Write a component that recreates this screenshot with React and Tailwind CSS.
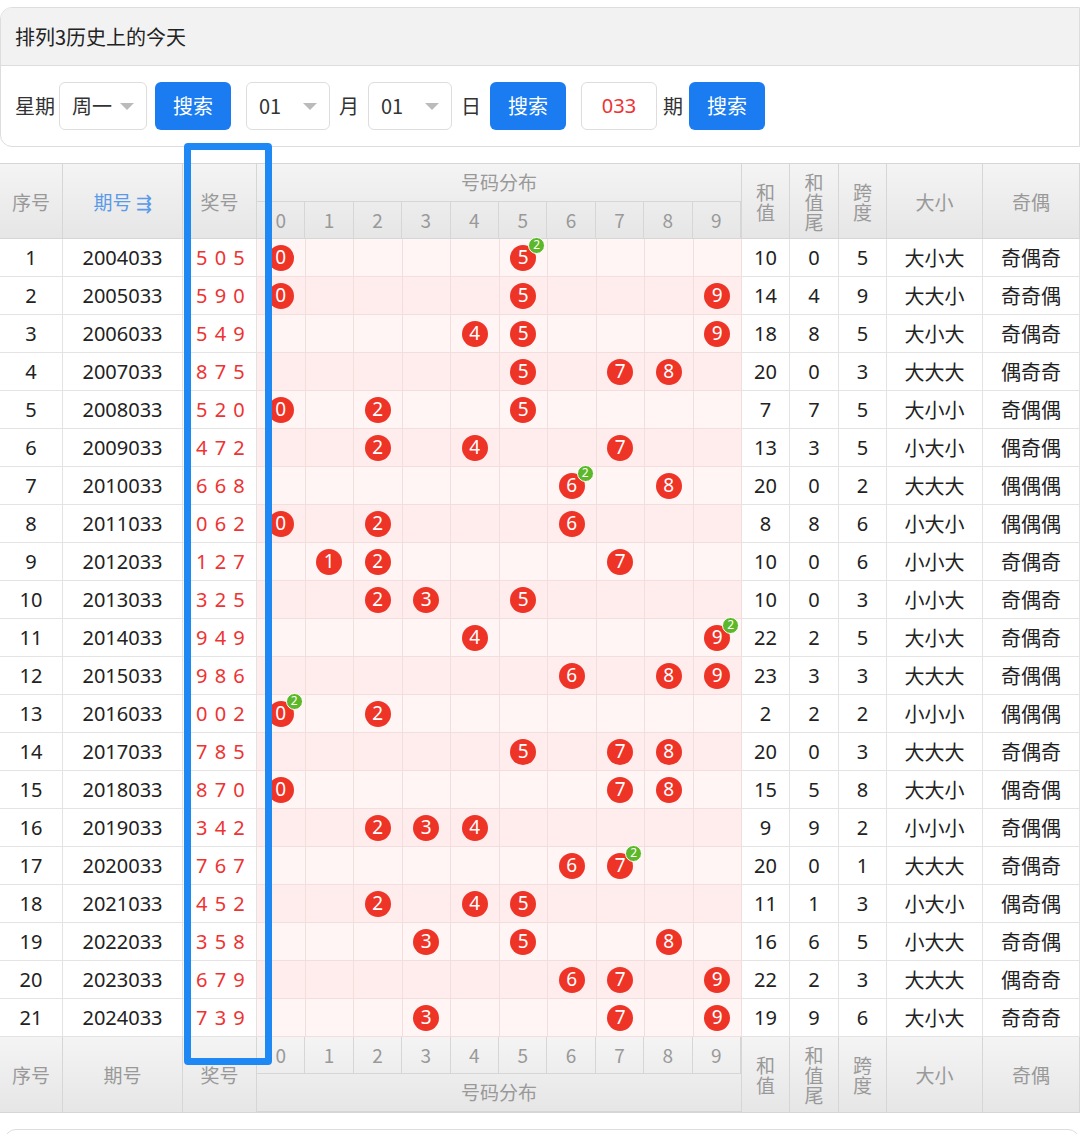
import React from "react";

const rows = [
["1","2004033","505","10","0","5","大小大","奇偶奇"],
["2","2005033","590","14","4","9","大大小","奇奇偶"],
["3","2006033","549","18","8","5","大小大","奇偶奇"],
["4","2007033","875","20","0","3","大大大","偶奇奇"],
["5","2008033","520","7","7","5","大小小","奇偶偶"],
["6","2009033","472","13","3","5","小大小","偶奇偶"],
["7","2010033","668","20","0","2","大大大","偶偶偶"],
["8","2011033","062","8","8","6","小大小","偶偶偶"],
["9","2012033","127","10","0","6","小小大","奇偶奇"],
["10","2013033","325","10","0","3","小小大","奇偶奇"],
["11","2014033","949","22","2","5","大小大","奇偶奇"],
["12","2015033","986","23","3","3","大大大","奇偶偶"],
["13","2016033","002","2","2","2","小小小","偶偶偶"],
["14","2017033","785","20","0","3","大大大","奇偶奇"],
["15","2018033","870","15","5","8","大大小","偶奇偶"],
["16","2019033","342","9","9","2","小小小","奇偶偶"],
["17","2020033","767","20","0","1","大大大","奇偶奇"],
["18","2021033","452","11","1","3","小大小","偶奇偶"],
["19","2022033","358","16","6","5","小大大","奇奇偶"],
["20","2023033","679","22","2","3","大大大","偶奇奇"],
["21","2024033","739","19","9","6","大小大","奇奇奇"],
];

const F = { fontFamily: '"Noto Sans","Noto Sans CJK SC",sans-serif' };
const C = { fontFamily: '"Noto Sans CJK SC","Noto Sans",serif' };
const cols = "grid-cols-[63px_120px_74px_repeat(10,48.5px)_48px_49px_48px_96px_97px]";

function Caret() {
  return <span className="inline-block w-0 h-0 border-l-[7px] border-r-[7px] border-t-[7px] border-l-transparent border-r-transparent border-t-[#bbb]" />;
}
function Sel({ v, w }) {
  return (
    <div className={`h-[48px] ${w} border border-[#ddd] rounded-md bg-white flex items-center justify-between px-3 text-[20px] text-[#333]`}>
      <span>{v}</span><Caret />
    </div>
  );
}
function Btn() {
  return <div className="h-[48px] w-[76px] rounded-md bg-[#1a7cf0] text-white text-[20px] flex items-center justify-center">搜索</div>;
}

const hd = "border-r border-[#d6d6d6] text-[#999] text-[19px] flex items-center justify-center text-center leading-[20px]";

function Header({ bottom }) {
  const digits = (
    <div className="grid grid-cols-10 h-[37px] border-b border-[#d6d6d6]">
      {[0,1,2,3,4,5,6,7,8,9].map(d => <div key={d} className={hd}>{d}</div>)}
    </div>
  );
  const label = <div className="h-[38px] flex items-center justify-center text-[#999] text-[19px] border-b border-[#d6d6d6]">号码分布</div>;
  return (
    <div className={`grid ${cols} h-[76px] bg-gradient-to-b from-[#f4f4f4] to-[#e6e6e6] border-b border-[#d6d6d6] ${bottom ? "" : "border-t"}`} style={C}>
      <div className={hd}>序号</div>
      <div className={hd + (bottom ? "" : " !text-[#5a9ae8]")}>{bottom ? "期号" : <>期号 <span className="ml-1">⇶</span></>}</div>
      <div className={hd}>奖号</div>
      <div className="col-span-10 flex flex-col border-r border-[#d6d6d6]">
        {bottom ? <>{digits}{label}</> : <>{label}{digits}</>}
      </div>
      <div className={hd}>和<br/>值</div>
      <div className={hd}>和<br/>值<br/>尾</div>
      <div className={hd}>跨<br/>度</div>
      <div className={hd}>大小</div>
      <div className={hd}>奇偶</div>
    </div>
  );
}

function Row({ r, i }) {
  const ds = r[2].split("").map(Number);
  const cnt = {};
  ds.forEach(d => cnt[d] = (cnt[d] || 0) + 1);
  const pink = i % 2 === 1 ? "bg-[#ffecec]" : "bg-[#fff5f5]";
  const cell = "h-[38px] overflow-visible whitespace-nowrap border-r border-b border-[#e3e3e3] flex items-center justify-center text-[20px] text-[#222]";
  return (
    <div className={`grid ${cols} h-[38px]`} style={F}>
      <div className={cell}>{r[0]}</div>
      <div className={cell}>{r[1]}</div>
      <div className={cell + " !justify-start pl-[13px] !text-[#e33] tracking-[1px]"}>{ds.join(" ")}</div>
      {[0,1,2,3,4,5,6,7,8,9].map(d => (
        <div key={d} className={`${cell} ${pink} !border-[#f3dede] relative`}>
          {cnt[d] && (
            <div className="relative w-[26px] h-[26px] rounded-full bg-[#ee3327] text-white text-[19px] leading-none flex items-center justify-center">
              {d}
              {cnt[d] > 1 && <span className="absolute -top-[8px] -right-[9px] w-[17px] h-[17px] rounded-full bg-[#5cb82a] border border-white text-white text-[12px] leading-none flex items-center justify-center">{cnt[d]}</span>}
            </div>
          )}
        </div>
      ))}
      <div className={cell}>{r[3]}</div>
      <div className={cell}>{r[4]}</div>
      <div className={cell}>{r[5]}</div>
      <div className={cell} style={C}>{r[6]}</div>
      <div className={cell} style={C}>{r[7]}</div>
    </div>
  );
}

export default function App() {
  return (
    <div className="w-[1080px] h-[1134px] bg-white overflow-hidden relative" style={C}>
      <div className="pt-[7px]">
        <div className="border border-[#ddd] rounded-l-xl overflow-hidden">
          <div className="h-[58px] bg-[#f2f2f2] border-b border-[#ddd] flex items-center pl-[14px] text-[20px] text-[#222]">排列3历史上的今天</div>
          <div className="h-[80px] flex items-center pl-[14px] text-[20px] text-[#333]">
            <span className="mr-[4px]">星期</span>
            <Sel v="周一" w="w-[88px]" />
            <div className="ml-[8px]"><Btn /></div>
            <div className="ml-[15px]"><Sel v="01" w="w-[84px]" /></div>
            <span className="mx-[9px]">月</span>
            <Sel v="01" w="w-[84px]" />
            <span className="mx-[9px]">日</span>
            <Btn />
            <div className="ml-[15px] h-[48px] w-[76px] border border-[#ddd] rounded-md flex items-center justify-center text-[#e33] text-[20px]" style={F}>033</div>
            <span className="mx-[6px]">期</span>
            <Btn />
          </div>
        </div>
      </div>
      <div className="mt-[16px]">
        <Header />
        {rows.map((r, i) => <Row key={i} r={r} i={i} />)}
        <Header bottom />
      </div>
      <div className="mt-[16px] ml-[4px] h-[20px] border border-[#ddd] rounded-t-xl" />
      <div className="absolute left-[184px] top-[143px] w-[88px] h-[922px] border-[7px] border-[#1e88f5] rounded-[4px]" />
    </div>
  );
}
